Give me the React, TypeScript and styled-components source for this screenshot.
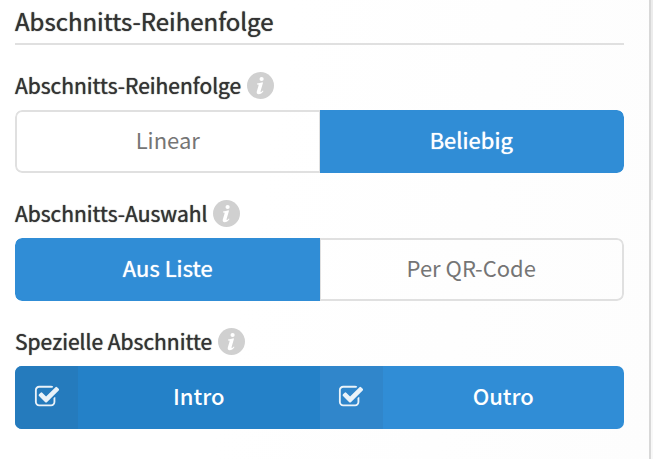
import React, { useId } from "react";
import styled, { createGlobalStyle, css } from "styled-components";

const GlobalStyle = createGlobalStyle`
  * { box-sizing: border-box; }
  body {
    margin: 0;
    background: linear-gradient(#ececec 200px, #f8f8f8 200px) no-repeat #f8f8f8;
    color: #333333;
    font-family: "Source Sans Pro", "Noto Sans CJK SC", "Noto Sans", sans-serif;
  }
`;

const Panel = styled.main`
  min-height: 100vh;
  margin-right: 2px;
  padding: 3px 25px 30px 15px;
  border-right: 2px solid #d8d8d8;
  background: linear-gradient(100deg, #ffffff 40%, #fdfdfd);
`;

const emphasis = css`
  font-weight: 400;
  text-shadow: 0 0 1px currentColor;
`;

const Title = styled.h2`
  ${emphasis}
  margin: 0 0 26px;
  padding-bottom: 4px;
  border-bottom: 2px solid #e0e0e0;
  font-size: 24px;
  line-height: 36px;
`;

const Group = styled.fieldset`
  min-width: 0;
  margin: 0 0 26px;
  padding: 0;
  border: 0;
  &:last-child { margin-bottom: 0; }
`;

const Legend = styled.legend`
  ${emphasis}
  display: flex;
  align-items: center;
  gap: 6px;
  padding: 0 0 11px;
  font-size: 21px;
  line-height: 28px;
`;

const InfoButton = styled.button`
  display: flex;
  width: 27px;
  height: 27px;
  padding: 0;
  border: 0;
  border-radius: 50%;
  background: #d0d0d0;
  cursor: help;
`;

const Segments = styled.div`
  display: grid;
  grid-template-columns: repeat(2, 1fr);
  border-radius: 7px;
  overflow: hidden;
`;

const HiddenInput = styled.input`
  position: absolute;
  opacity: 0;
  pointer-events: none;
`;

const segment = css`
  position: relative;
  display: flex;
  align-items: center;
  height: 63px;
  font-size: 22px;
  line-height: 32px;
  cursor: pointer;
`;

const Option = styled.label`
  ${segment}
  justify-content: center;
  padding-bottom: 5px;
  border: 2px solid #e0e0e0;
  color: #757575;
  &:first-of-type { border-right-width: 1px; border-radius: 7px 0 0 7px; }
  &:last-of-type { border-left-width: 1px; border-radius: 0 7px 7px 0; }
  &:has(input:checked) {
    ${emphasis}
    border-color: #308dd6;
    background: #308dd6;
    color: #ffffff;
  }
`;

const Toggle = styled.label<{ $hovered?: boolean }>`
  ${segment}
  background: ${(p) => (p.$hovered ? "#2481c8" : "#308dd6")};
  color: #ffffff;
  font-weight: 500;
`;

const TickCell = styled.span<{ $hovered?: boolean }>`
  display: flex;
  align-items: center;
  justify-content: center;
  width: 63px;
  height: 100%;
  padding-bottom: 2px;
  background: ${(p) => (p.$hovered ? "#257bbd" : "#3086cb")};
  svg { opacity: 0; }
  input:checked + & svg { opacity: 0.9; }
`;

const ToggleText = styled.span`
  flex: 1;
  padding-bottom: 5px;
  text-align: center;
`;

const InfoIcon = () => (
  <svg width="27" height="27" viewBox="0 0 27 27" fill="#ffffff" aria-hidden="true">
    <ellipse cx="14.6" cy="7" rx="2.1" ry="1.9" />
    <path d="M10 11.6c1.9-.3 3.7-.8 5.5-1.3l.5.4-2.4 8.3c-.2.8 0 1 .4.9.6-.2 1.2-.8 1.8-1.5l.7.5c-1.4 2.1-3.1 3.3-4.8 3.3-1.6 0-2.3-1-1.9-2.6l1.7-5.8c.2-.8 0-1.2-.7-1.2H10z" />
  </svg>
);

const CheckIcon = () => (
  <svg width="26" height="26" viewBox="0 0 1792 1792" fill="#ffffff" aria-hidden="true">
    <path d="M1472 930v318q0 119-84.5 203.5t-203.5 84.5h-832q-119 0-203.5-84.5t-84.5-203.5v-832q0-119 84.5-203.5t203.5-84.5h832q63 0 117 25 15 7 18 23 3 17-9 29l-49 49q-10 10-23 10-3 0-9-2-23-6-45-6h-832q-66 0-113 47t-47 113v832q0 66 47 113t113 47h832q66 0 113-47t47-113v-254q0-13 9-22l64-64q10-10 23-10 6 0 12 3 20 8 20 29zm231-489l-814 814q-24 24-57 24t-57-24l-430-430q-24-24-24-57t24-57l110-110q24-24 57-24t57 24l263 263 647-647q24-24 57-24t57 24l110 110q24 24 24 57t-24 57z" />
  </svg>
);

function GroupLabel({ children }: { children: string }) {
  return (
    <Legend>
      {children}
      <InfoButton type="button" aria-label={`Info: ${children}`}>
        <InfoIcon />
      </InfoButton>
    </Legend>
  );
}

function RadioGroup({ label, options, selected }: { label: string; options: string[]; selected: string }) {
  const name = useId();
  return (
    <Group>
      <GroupLabel>{label}</GroupLabel>
      <Segments>
        {options.map((option) => (
          <Option key={option}>
            <HiddenInput type="radio" name={name} value={option} defaultChecked={option === selected} />
            {option}
          </Option>
        ))}
      </Segments>
    </Group>
  );
}

function CheckToggle({ label, hovered }: { label: string; hovered?: boolean }) {
  return (
    <Toggle $hovered={hovered}>
      <HiddenInput type="checkbox" defaultChecked />
      <TickCell $hovered={hovered}>
        <CheckIcon />
      </TickCell>
      <ToggleText>{label}</ToggleText>
    </Toggle>
  );
}

export default function App() {
  return (
    <>
      <GlobalStyle />
      <Panel>
        <Title>Abschnitts-Reihenfolge</Title>
        <RadioGroup label="Abschnitts-Reihenfolge" options={["Linear", "Beliebig"]} selected="Beliebig" />
        <RadioGroup label="Abschnitts-Auswahl" options={["Aus Liste", "Per QR-Code"]} selected="Aus Liste" />
        <Group>
          <GroupLabel>Spezielle Abschnitte</GroupLabel>
          <Segments>
            <CheckToggle label="Intro" hovered />
            <CheckToggle label="Outro" />
          </Segments>
        </Group>
      </Panel>
    </>
  );
}
